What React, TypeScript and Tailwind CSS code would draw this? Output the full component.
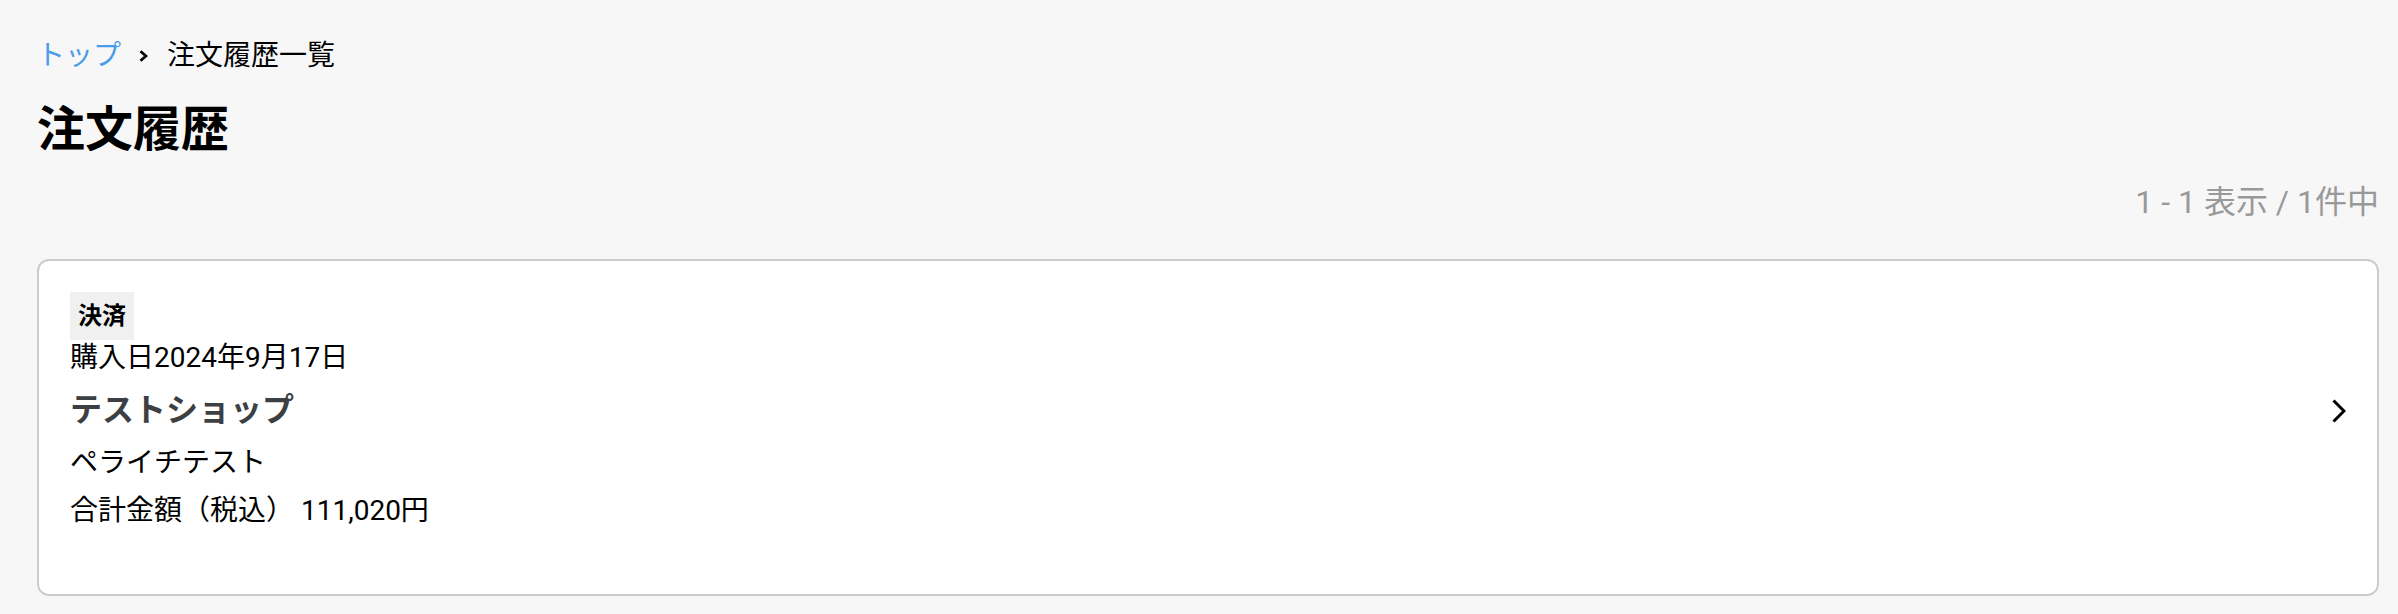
import React from 'react'

const order = {
  status: '決済',
  date: '購入日2024年9月17日',
  shop: 'テストショップ',
  item: 'ペライチテスト',
  total: '合計金額（税込） 111,020円',
}

export default function App() {
  return (
    <div className="min-h-screen bg-[#f7f7f7] pl-[37px] pr-[19px] pt-[35px] font-[Roboto,'Noto_Sans_CJK_JP',sans-serif] text-black">
      {/* Breadcrumb */}
      <nav className="flex items-center text-[28px] leading-[42px]">
        <a href="#" className="text-[#4a9be8]">トップ</a>
        <svg className="ml-[18px] mr-[19px] h-[12px] w-[9px]" viewBox="0 0 9 12" fill="none">
          <polyline points="1.5,1.2 7,6 1.5,10.8" stroke="#000" strokeWidth="2.8" />
        </svg>
        <span>注文履歴一覧</span>
      </nav>

      <h1 className="mt-[17px] text-[48px] font-bold leading-[72px]">注文履歴</h1>

      <div className="mt-[12px] text-right text-[32px] leading-[48px] text-[#999]">1 - 1 表示 / 1件中</div>

      {/* Order card */}
      <div className="mt-[33px] flex items-center rounded-[12px] border-2 border-[#cccccc] bg-white pl-[31px] pr-[31px] pt-[31px] pb-[59px]">
        <div className="flex flex-1 flex-col">
          <span className="self-start bg-[#f0f0f0] px-2 py-2 text-[24px] font-bold leading-[32px]">{order.status}</span>
          <p className="text-[28px] leading-[36px]">{order.date}</p>
          <p className="mt-[10px] text-[32px] font-bold leading-[48px] text-[#3c4043]">{order.shop}</p>
          <p className="mt-[5px] text-[28px] leading-[48px]">{order.item}</p>
          <p className="text-[28px] leading-[48px]">{order.total}</p>
        </div>
        <svg className="mb-[6px] h-[24px] w-[14px]" viewBox="0 0 14 24" fill="none">
          <polyline points="1.5,1.5 12,12 1.5,22.5" stroke="#000" strokeWidth="3" />
        </svg>
      </div>
    </div>
  )
}
